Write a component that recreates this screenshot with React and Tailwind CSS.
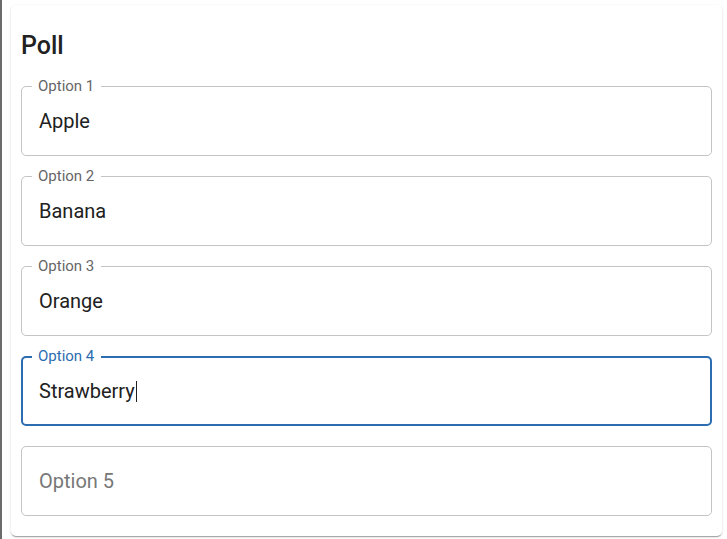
import React from 'react';

const options = [
  { label: 'Option 1', value: 'Apple' },
  { label: 'Option 2', value: 'Banana' },
  { label: 'Option 3', value: 'Orange' },
  { label: 'Option 4', value: 'Strawberry', focused: true },
  { label: 'Option 5', value: '' },
];

function Field({ label, value, focused }) {
  if (!value) {
    return (
      <div className="h-[70px] rounded-[5px] border border-[#c4c4c4] flex items-center px-[17px]">
        <span className="text-[20px] text-[#777]">{label}</span>
      </div>
    );
  }
  if (focused) {
    return (
      <div className="relative h-[70px] rounded-[5px] border-2 border-[#2c6cb0] flex items-center px-[16px]">
        <span className="absolute -top-[12px] left-[9px] pl-[6px] pr-[7px] bg-white text-[15px] leading-[20px] text-[#2c6cb0]">
          {label}
        </span>
        <span className="text-[20px] text-[#212121]">{value}</span>
        <span className="w-px h-[21px] bg-[#212121] ml-[1px]"></span>
      </div>
    );
  }
  return (
    <div className="relative h-[70px] rounded-[5px] border border-[#c4c4c4] flex items-center px-[17px]">
      <span className="absolute -top-[11px] left-[10px] pl-[6px] pr-[7px] bg-white text-[15px] leading-[20px] text-[#666]">
        {label}
      </span>
      <span className="text-[20px] text-[#212121]">{value}</span>
    </div>
  );
}

export default function App() {
  return (
    <div className="flex h-[539px] w-[727px] bg-white font-['Roboto',sans-serif] overflow-hidden">
      <div className="w-[2px] h-full bg-[#6b6b6b]"></div>
      <div className="ml-[9px] mt-[5px] w-[711px] h-[531px] bg-white rounded-[5px] shadow-[0_2px_1px_-1px_rgba(0,0,0,0.2),0_1px_1px_0_rgba(0,0,0,0.14),0_1px_3px_0_rgba(0,0,0,0.12)] px-[10px] pt-[26px] pb-[20px]">
        <h2 className="text-[25px] leading-[30px] font-medium text-[#212121] mb-[25px]">Poll</h2>
        <div className="flex flex-col gap-[20px]">
          {options.map((o) => (
            <Field key={o.label} {...o} />
          ))}
        </div>
      </div>
    </div>
  );
}
